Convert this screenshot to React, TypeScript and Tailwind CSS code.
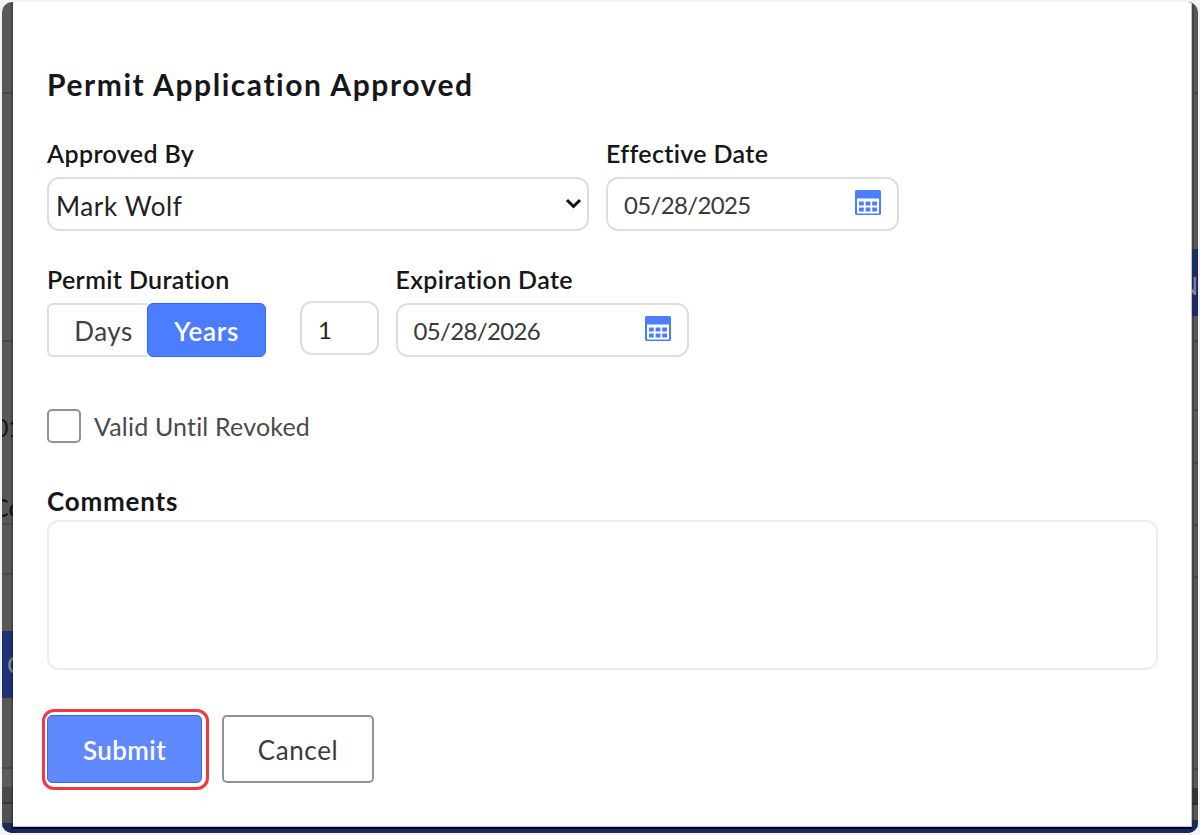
import { useState, type JSX, type ReactNode } from 'react'

type StripRow = {
    className: string;
    content?: ReactNode;
}

// Slices of the dimmed page on either side of the dialog
const leftRows: StripRow[] = [
    { className: 'h-[92px] border-b-2 border-[#494949]' },
    { className: 'h-[248px] border-b-2 border-[#494949]' },
    {
        className: 'h-[183px] border-b-2 border-[#494949] pt-[71px]',
        content: (
            <>
                <p className="-ml-[8px] h-[80px] text-[25px] leading-[28px] tracking-[-0.8px] whitespace-nowrap text-[#17171d]">01</p>
                <p className="-ml-[10px] text-[25px] leading-[28px] whitespace-nowrap text-[#101014]">Co</p>
            </>
        )
    },
    { className: 'h-[50px] border-b-2 border-[#494949]' },
    { className: 'h-[56px]' },
    { className: 'h-[67px] bg-[#1f3273] pt-[19px]', content: <p className="ml-[5px] text-[25px] leading-[28px] text-[#84889a]">C</p> },
    { className: 'h-[71px] border-b-2 border-[#494949]' },
    { className: 'h-[18px] bg-[#5b5c5c]' },
    { className: 'h-[17px] bg-[#484a4c] border-b-2 border-[#37393b]' },
    { className: 'h-[19px] bg-[#4f5152]' },
    { className: 'h-[10px] bg-[#1b2b58]' }
]

const rightRows: StripRow[] = [
    { className: 'h-[92px] border-b-2 border-[#454545]' },
    { className: 'h-[155px]' },
    { className: 'h-[67px] bg-[#1b2b66] pt-[22px]', content: <p className="-ml-[13px] text-[25px] leading-[28px] text-[#84889a]">N</p> },
    { className: 'h-[26px] border-b-2 border-[#454545]' },
    { className: 'h-[69px] border-b-2 border-[#454545]' },
    { className: 'h-[53px] border-b-2 border-[#454545]' },
    { className: 'h-[62px] border-b-2 border-[#454545]' },
    { className: 'h-[52px] border-b-2 border-[#454545]' },
    { className: 'h-[192px] border-b-2 border-[#454545]' },
    { className: 'h-[18px]' },
    { className: 'h-[17px] bg-[#353637] border-b-2 border-[#2d2e2f]' },
    { className: 'h-[15px]' },
    { className: 'h-[14px] bg-[#1b2b58]' }
]

const Strip = ({ rows, className }: { rows: StripRow[]; className: string }): JSX.Element => (
    <div className={`flex h-full shrink-0 flex-col overflow-hidden ${className}`}>
        {rows.map((row, i) => (
            <div key={i} className={`shrink-0 ${row.className}`}>{row.content}</div>
        ))}
    </div>
)

const CalendarIcon = (): JSX.Element => (
    <svg width="26" height="26" viewBox="0 0 26 26" fill="#4c7dfe" className="mb-[2px]">
        <path fillRule="evenodd" d="M1.5 0h23A1.5 1.5 0 0 1 26 1.5v22a1.5 1.5 0 0 1-1.5 1.5h-23A1.5 1.5 0 0 1 0 23.5v-22A1.5 1.5 0 0 1 1.5 0ZM2 8.5V23.500h22V8.500Z" />
        <path d="M4 11.500h4.800v4H4ZM10.600 11.500h4.800v4h-4.800ZM17.200 11.500H22v4h-4.800ZM4 17.500h4.800v4H4ZM10.600 17.500h4.800v4h-4.800ZM17.200 17.500H22v4h-4.800Z" />
    </svg>
)

const Label = ({ children }: { children: ReactNode }): JSX.Element => (
    <p className="h-9 text-[25px] leading-[25px] font-semibold tracking-[0.35px] whitespace-nowrap text-[#161616]">{children}</p>
)

const DateField = ({ label, value }: { label: string; value: string }): JSX.Element => (
    <div>
        <Label>{label}</Label>
        <div className="flex h-[54px] w-[293px] items-center justify-between rounded-xl border-2 border-[#dedede] px-4">
            <span className="pt-[2px] text-[24px] tracking-[-0.65px] text-[#3a3a3a]">{value}</span>
            <CalendarIcon />
        </div>
    </div>
)

const App = (): JSX.Element => {
    const [unit, setUnit] = useState<string>('Years')
    const [revoked, setRevoked] = useState<boolean>(false)

    return (
        <div className="h-[835px] w-[1200px] bg-[#f2f2f9] p-[2px] font-['Lato',sans-serif]">
            <div className="flex h-[831px] overflow-hidden rounded-[10px] bg-[#585858]">
                <Strip rows={leftRows} className="w-[11px]" />

                <div className="flex w-[1179px] shrink-0 flex-col bg-[#1b2b58] shadow-[0_0_0_2px_rgba(0,0,0,0.2)]">
                    <div className="h-[825px] border-r border-b border-[#c4c4c4] bg-white pt-[65px] pl-[34px]">
                        <h1 className="h-[74px] text-[30px] leading-[35px] font-bold tracking-[1.55px] text-[#17171a]">Permit Application Approved</h1>

                        <div className="flex h-[126px] gap-[17px]">
                            <div>
                                <Label>Approved By</Label>
                                <div className="flex h-[54px] w-[542px] items-center justify-between rounded-xl border-2 border-[#dedede] pr-[5px] pl-[7px]">
                                    <span className="pt-[4px] text-[26px] tracking-[0.6px] text-[#222]">Mark Wolf</span>
                                    <svg width="17" height="12" viewBox="0 0 17 12" fill="none" stroke="#111" strokeWidth="3">
                                        <path d="M2 2 8.500 8.500 15 2" />
                                    </svg>
                                </div>
                            </div>
                            <DateField label="Effective Date" value="05/28/2025" />
                        </div>

                        <div className="flex h-[142px]">
                            <div className="w-[253px]">
                                <Label>Permit Duration</Label>
                                <div className="flex h-[54px] w-[219px] text-[26px]">
                                    <button onClick={() => setUnit('Days')} className="w-[100px] rounded-l-md border-2 border-r-0 border-[#dedede] pt-[2px] pl-[11px] tracking-[0.5px] text-[#3f3f3f]">Days</button>
                                    <button onClick={() => setUnit('Years')} className={`w-[119px] rounded-md border pt-[2px] font-semibold tracking-[0.7px] ${unit === 'Years' ? 'border-[#2a6bff] bg-[#4c7dfe] text-white' : 'border-[#dedede]'}`}>Years</button>
                                </div>
                            </div>
                            <div className="mt-[34px] mr-[16.5px] flex h-[54px] w-[79px] items-center rounded-xl border-2 border-[#dedede] pt-[3px] pl-4 text-[24px] text-[#222]">1</div>
                            <DateField label="Expiration Date" value="05/28/2026" />
                        </div>

                        <div className="flex h-[81px] items-start gap-[13px]">
                            <div onClick={() => setRevoked(!revoked)} className={`size-[34px] rounded-[5px] border-2 border-[#929292] ${revoked ? 'bg-[#4c7dfe]' : 'bg-white'}`}></div>
                            <p className="text-[25px] leading-[34px] tracking-[0.18px] text-[#4a4a4a]">Valid Until Revoked</p>
                        </div>

                        <p className="h-[30px] text-[26px] leading-[23px] font-bold tracking-[0.8px] text-[#161616]">Comments</p>
                        <div className="h-[150px] w-[1111px] rounded-xl border-2 border-[#ececf1]"></div>

                        {/* Form actions */}
                        <div className="mt-[39px] -ml-[5px] flex items-start gap-[13px] text-[26px]">
                            <div className="h-[81px] w-[167px] rounded-xl border-[3px] border-[#f63542] p-[3px] pl-[2px]">
                                <button className="h-[68px] w-[155px] rounded-[5px] border border-[#2a6bff] bg-[#6089ff] pt-[2px] font-semibold tracking-[0.4px] text-white">Submit</button>
                            </div>
                            <button className="mt-[6px] h-[68px] w-[152px] rounded-[5px] border-2 border-[#929292] pt-[2px] tracking-[0.6px] text-[#3a3a3a]">Cancel</button>
                        </div>
                    </div>
                    <div className="h-[2px] bg-[#00004a]"></div>
                </div>

                <Strip rows={rightRows} className="w-[6px]" />
            </div>
        </div>
    )
}

export default App
